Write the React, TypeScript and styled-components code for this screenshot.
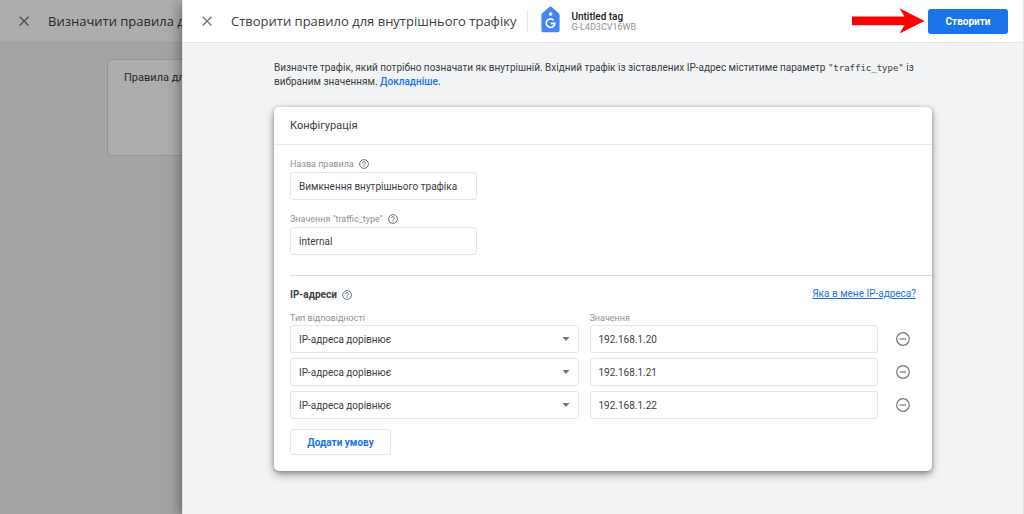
import React, { useId, useState } from "react";
import styled, { createGlobalStyle } from "styled-components";

const GlobalStyle = createGlobalStyle`
  *, *::before, *::after { box-sizing: border-box; }
  html, body { margin: 0; background: #f1f3f4; }
  body, button, input, select { font-family: Roboto, "Liberation Sans", sans-serif; }
  h1, h2, h3, p { margin: 0; }
`;

const Page = styled.div`
  position: relative;
  min-height: 100vh;
  overflow: hidden;
  background: #f1f3f4;
  color: #3c4043;
`;

const TopBar = styled.header`
  display: flex;
  align-items: center;
  height: 43px;
  padding: 0 15px;
  background: #fff;
  border-bottom: 1px solid #e3e5e7;
`;

const IconButton = styled.button`
  display: inline-flex;
  align-items: center;
  justify-content: center;
  flex: none;
  padding: 0;
  border: 0;
  background: none;
  color: #757575;
  cursor: pointer;
`;

const CloseButton = styled(IconButton)`
  width: 18px;
  height: 18px;
  margin-right: 15px;
`;

const Title = styled.h1`
  font-family: "Open Sans", Roboto, sans-serif;
  font-size: 13px;
  line-height: 20px;
  font-weight: 400;
  white-space: nowrap;
`;

const BackgroundCard = styled.section`
  height: 97px;
  margin: 16px 107px;
  padding: 10px 16px;
  background: #fff;
  border: 1px solid #dadce0;
  border-radius: 5px;
`;

const CardTitle = styled.h2`
  font-size: 11px;
  line-height: 16px;
  font-weight: 400;
  white-space: nowrap;
`;

const Scrim = styled.div`
  position: absolute;
  inset: 0;
  background: rgba(0, 0, 0, 0.32);
`;

const Drawer = styled.main`
  position: absolute;
  inset: 0 0 0 182px;
  overflow: auto;
  background: #f1f3f4;
  border: solid #e3e5e7;
  border-width: 0 1px;
  box-shadow: 0 4px 14px rgba(0, 0, 0, 0.5);
`;

const Divider = styled.span`
  width: 1px;
  height: 22px;
  margin: 0 13px 0 11px;
  background: #e3e5e7;
`;

const TagInfo = styled.div`
  display: flex;
  align-items: flex-end;
  gap: 11px;
  padding-bottom: 4px;
  white-space: nowrap;
`;

const TagName = styled.div`
  font-size: 10px;
  line-height: 11px;
  font-weight: 500;
  color: #202124;
`;

const TagId = styled.div`
  font-size: 9px;
  line-height: 11px;
  color: #8f9397;
`;

const Actions = styled.div`
  display: flex;
  align-items: center;
  gap: 3px;
  margin-left: auto;
`;

const PrimaryButton = styled.button`
  height: 25px;
  width: 80px;
  border: 0;
  border-radius: 3px;
  background: #1a73e8;
  color: #fff;
  font-size: 10px;
  font-weight: 700;
  cursor: pointer;
`;

const Content = styled.div`
  max-width: 658px;
  margin: 0 auto;
  padding: 18px 0 43px;
`;

const Intro = styled.p`
  margin-bottom: 18px;
  font-size: 10px;
  line-height: 14px;
`;

const Code = styled.code`
  font-family: "DejaVu Sans Mono", monospace;
  font-size: 9px;
`;

const Link = styled.a<{ $underlined?: boolean }>`
  color: #1a73e8;
  font-size: 10px;
  line-height: 12px;
  font-weight: ${(p) => (p.$underlined ? 400 : 500)};
  text-decoration: ${(p) => (p.$underlined ? "underline" : "none")};
`;

const Card = styled.section`
  background: #fff;
  border-radius: 5px;
  box-shadow: 0 4px 8px rgba(0, 0, 0, 0.32), 0 1px 4px rgba(0, 0, 0, 0.28);
`;

const CardHeader = styled.div`
  padding: 11px 16px 10px;
  border-bottom: 1px solid #e8eaed;
`;

const Section = styled.div<{ $divided?: boolean }>`
  margin-left: 16px;
  padding: ${(p) => (p.$divided ? "12px 16px 16px 0" : "12px 16px 20px 0")};
  border-top: ${(p) => (p.$divided ? "1px solid #dadce0" : "0")};
`;

const Field = styled.div`
  max-width: 187px;
  & + & { margin-top: 12px; }
`;

const LabelRow = styled.div`
  display: flex;
  align-items: center;
  gap: 5px;
  height: 14px;
`;

const FieldLabelRow = styled(LabelRow)`
  margin-bottom: 1px;
`;

const Label = styled.label`
  font-size: 9px;
  line-height: 14px;
  color: #8f9397;
  white-space: nowrap;
`;

const TextInput = styled.input`
  display: block;
  width: 100%;
  height: 28px;
  padding: 0 8px;
  border: 1px solid #e3e5e7;
  border-radius: 3px;
  background: #fff;
  color: #3c4043;
  font-size: 10px;
`;

const SelectBox = styled.div`
  display: grid;
  align-items: center;
  & > * { grid-area: 1 / 1; }
  & > svg { justify-self: end; margin-right: 9px; pointer-events: none; }
`;

const Select = styled.select`
  appearance: none;
  width: 100%;
  height: 28px;
  padding: 0 24px 0 8px;
  border: 1px solid #e3e5e7;
  border-radius: 3px;
  background: #fff;
  color: #3c4043;
  font-size: 10px;
`;

const SectionHeader = styled.div`
  display: flex;
  align-items: flex-start;
  justify-content: space-between;
  height: 14px;
  margin-bottom: 9px;
`;

const SectionTitle = styled.h3`
  font-size: 10px;
  line-height: 14px;
  font-weight: 700;
`;

const ConditionGrid = styled.div`
  display: grid;
  grid-template-columns: 1fr 1fr 27px;
  column-gap: 11px;
`;

const Conditions = styled.div`
  display: grid;
  gap: 5px;
`;

const RemoveButton = styled(IconButton)`
  width: 27px;
  height: 28px;
`;

const OutlineButton = styled.button`
  height: 26px;
  min-width: 101px;
  margin-top: 10px;
  border: 1px solid #e3e5e7;
  border-radius: 3px;
  background: #fff;
  color: #1a73e8;
  font-size: 10px;
  font-weight: 700;
  cursor: pointer;
`;

const CloseIcon = () => (
  <svg width="12" height="12" viewBox="0 0 12 12" fill="none" stroke="currentColor" strokeWidth="1.3" aria-hidden="true">
    <path d="M1.7 1.7l8.8 8.8M10.5 1.7l-8.8 8.8" />
  </svg>
);

const TagIcon = () => (
  <svg width="19" height="27" viewBox="0 0 19 27" aria-hidden="true">
    <path d="M9.5 0.5Q10.3 0.5 11 1.2L17.7 7.2Q18.6 8 18.6 9.2V24.4Q18.6 26.3 16.7 26.3H2.3Q.4 26.3 .4 24.4V9.2Q.4 8 1.3 7.2L8 1.2Q8.7.5 9.5.5Z" fill="#4285f4" />
    <circle cx="9.6" cy="8" r="1.8" fill="#fff" />
    <path d="M12.7 14.2A4.3 4.3 0 1 0 13.8 17.3H9.7" fill="none" stroke="#fff" strokeWidth="1.7" />
  </svg>
);

const ArrowIcon = () => (
  <svg width="73" height="26" viewBox="0 0 73 26" aria-hidden="true">
    <path d="M0 8.5H52.5L47.5 0.3L72.5 13L47.5 25.5L52.5 17.3H0Z" fill="#f00" />
  </svg>
);

const HelpIcon = () => (
  <svg width="10" height="10" viewBox="0 0 10 10" fill="none" stroke="#5f6368" aria-hidden="true">
    <circle cx="5" cy="5" r="4.4" strokeWidth="0.9" />
    <path d="M3.6 4a1.4 1.4 0 1 1 2.1 1.2C5.2 5.5 5 5.7 5 6.3" strokeWidth="0.9" />
    <path d="M5 6.9v0.9" strokeWidth="0.9" />
  </svg>
);

const CaretIcon = () => (
  <svg width="8" height="4" viewBox="0 0 8 4" aria-hidden="true">
    <path d="M0.5 0h7L4 4z" fill="#757575" />
  </svg>
);

const MinusCircleIcon = () => (
  <svg width="14" height="14" viewBox="0 0 14 14" fill="none" stroke="currentColor" strokeWidth="1.2" aria-hidden="true">
    <circle cx="7" cy="7" r="6.3" />
    <path d="M3.8 7h6.4" />
  </svg>
);

const HelpButton = () => (
  <IconButton type="button" aria-label="Довідка">
    <HelpIcon />
  </IconButton>
);

function LabeledInput({ label, initial }: { label: string; initial: string }) {
  const id = useId();
  return (
    <Field>
      <FieldLabelRow>
        <Label htmlFor={id}>{label}</Label>
        <HelpButton />
      </FieldLabelRow>
      <TextInput id={id} defaultValue={initial} />
    </Field>
  );
}

export default function App() {
  const [addresses, setAddresses] = useState(["192.168.1.20", "192.168.1.21", "192.168.1.22"]);

  const update = (index: number, value: string) =>
    setAddresses((list) => list.map((item, i) => (i === index ? value : item)));
  const remove = (index: number) => setAddresses((list) => list.filter((_, i) => i !== index));

  return (
    <Page>
      <GlobalStyle />
      <TopBar>
        <CloseButton type="button" aria-label="Закрити">
          <CloseIcon />
        </CloseButton>
        <Title as="div">Визначити правила для</Title>
      </TopBar>
      <BackgroundCard>
        <CardTitle>Правила для</CardTitle>
      </BackgroundCard>
      <Scrim />

      <Drawer>
        <TopBar>
          <CloseButton type="button" aria-label="Закрити">
            <CloseIcon />
          </CloseButton>
          <Title>Створити правило для внутрішнього трафіку</Title>
          <Divider />
          <TagInfo>
            <TagIcon />
            <div>
              <TagName>Untitled tag</TagName>
              <TagId>G-L4D3CV16WB</TagId>
            </div>
          </TagInfo>
          <Actions>
            <ArrowIcon />
            <PrimaryButton type="button">Створити</PrimaryButton>
          </Actions>
        </TopBar>

        <Content>
          <Intro>
            Визначте трафік, який потрібно позначати як внутрішній. Вхідний трафік із зіставлених IP-адрес
            міститиме параметр <Code>"traffic_type"</Code> із вибраним значенням.{" "}
            <Link href="#more">Докладніше.</Link>
          </Intro>

          <Card>
            <CardHeader>
              <CardTitle>Конфігурація</CardTitle>
            </CardHeader>
            <Section>
              <LabeledInput label="Назва правила" initial="Вимкнення внутрішнього трафіка" />
              <LabeledInput label={'Значення "traffic_type"'} initial="internal" />
            </Section>
            <Section $divided>
              <SectionHeader>
                <LabelRow>
                  <SectionTitle>IP-адреси</SectionTitle>
                  <HelpButton />
                </LabelRow>
                <Link href="#my-ip" $underlined>
                  Яка в мене IP-адреса?
                </Link>
              </SectionHeader>
              <ConditionGrid>
                <Label htmlFor="match-0">Тип відповідності</Label>
                <Label htmlFor="value-0">Значення</Label>
              </ConditionGrid>
              <Conditions>
                {addresses.map((address, i) => (
                  <ConditionGrid key={i}>
                    <SelectBox>
                      <Select id={`match-${i}`} aria-label="Тип відповідності">
                        <option>IP-адреса дорівнює</option>
                      </Select>
                      <CaretIcon />
                    </SelectBox>
                    <TextInput
                      id={`value-${i}`}
                      aria-label="Значення"
                      value={address}
                      onChange={(e) => update(i, e.target.value)}
                    />
                    <RemoveButton type="button" aria-label="Видалити умову" onClick={() => remove(i)}>
                      <MinusCircleIcon />
                    </RemoveButton>
                  </ConditionGrid>
                ))}
              </Conditions>
              <OutlineButton type="button" onClick={() => setAddresses((list) => [...list, ""])}>
                Додати умову
              </OutlineButton>
            </Section>
          </Card>
        </Content>
      </Drawer>
    </Page>
  );
}
